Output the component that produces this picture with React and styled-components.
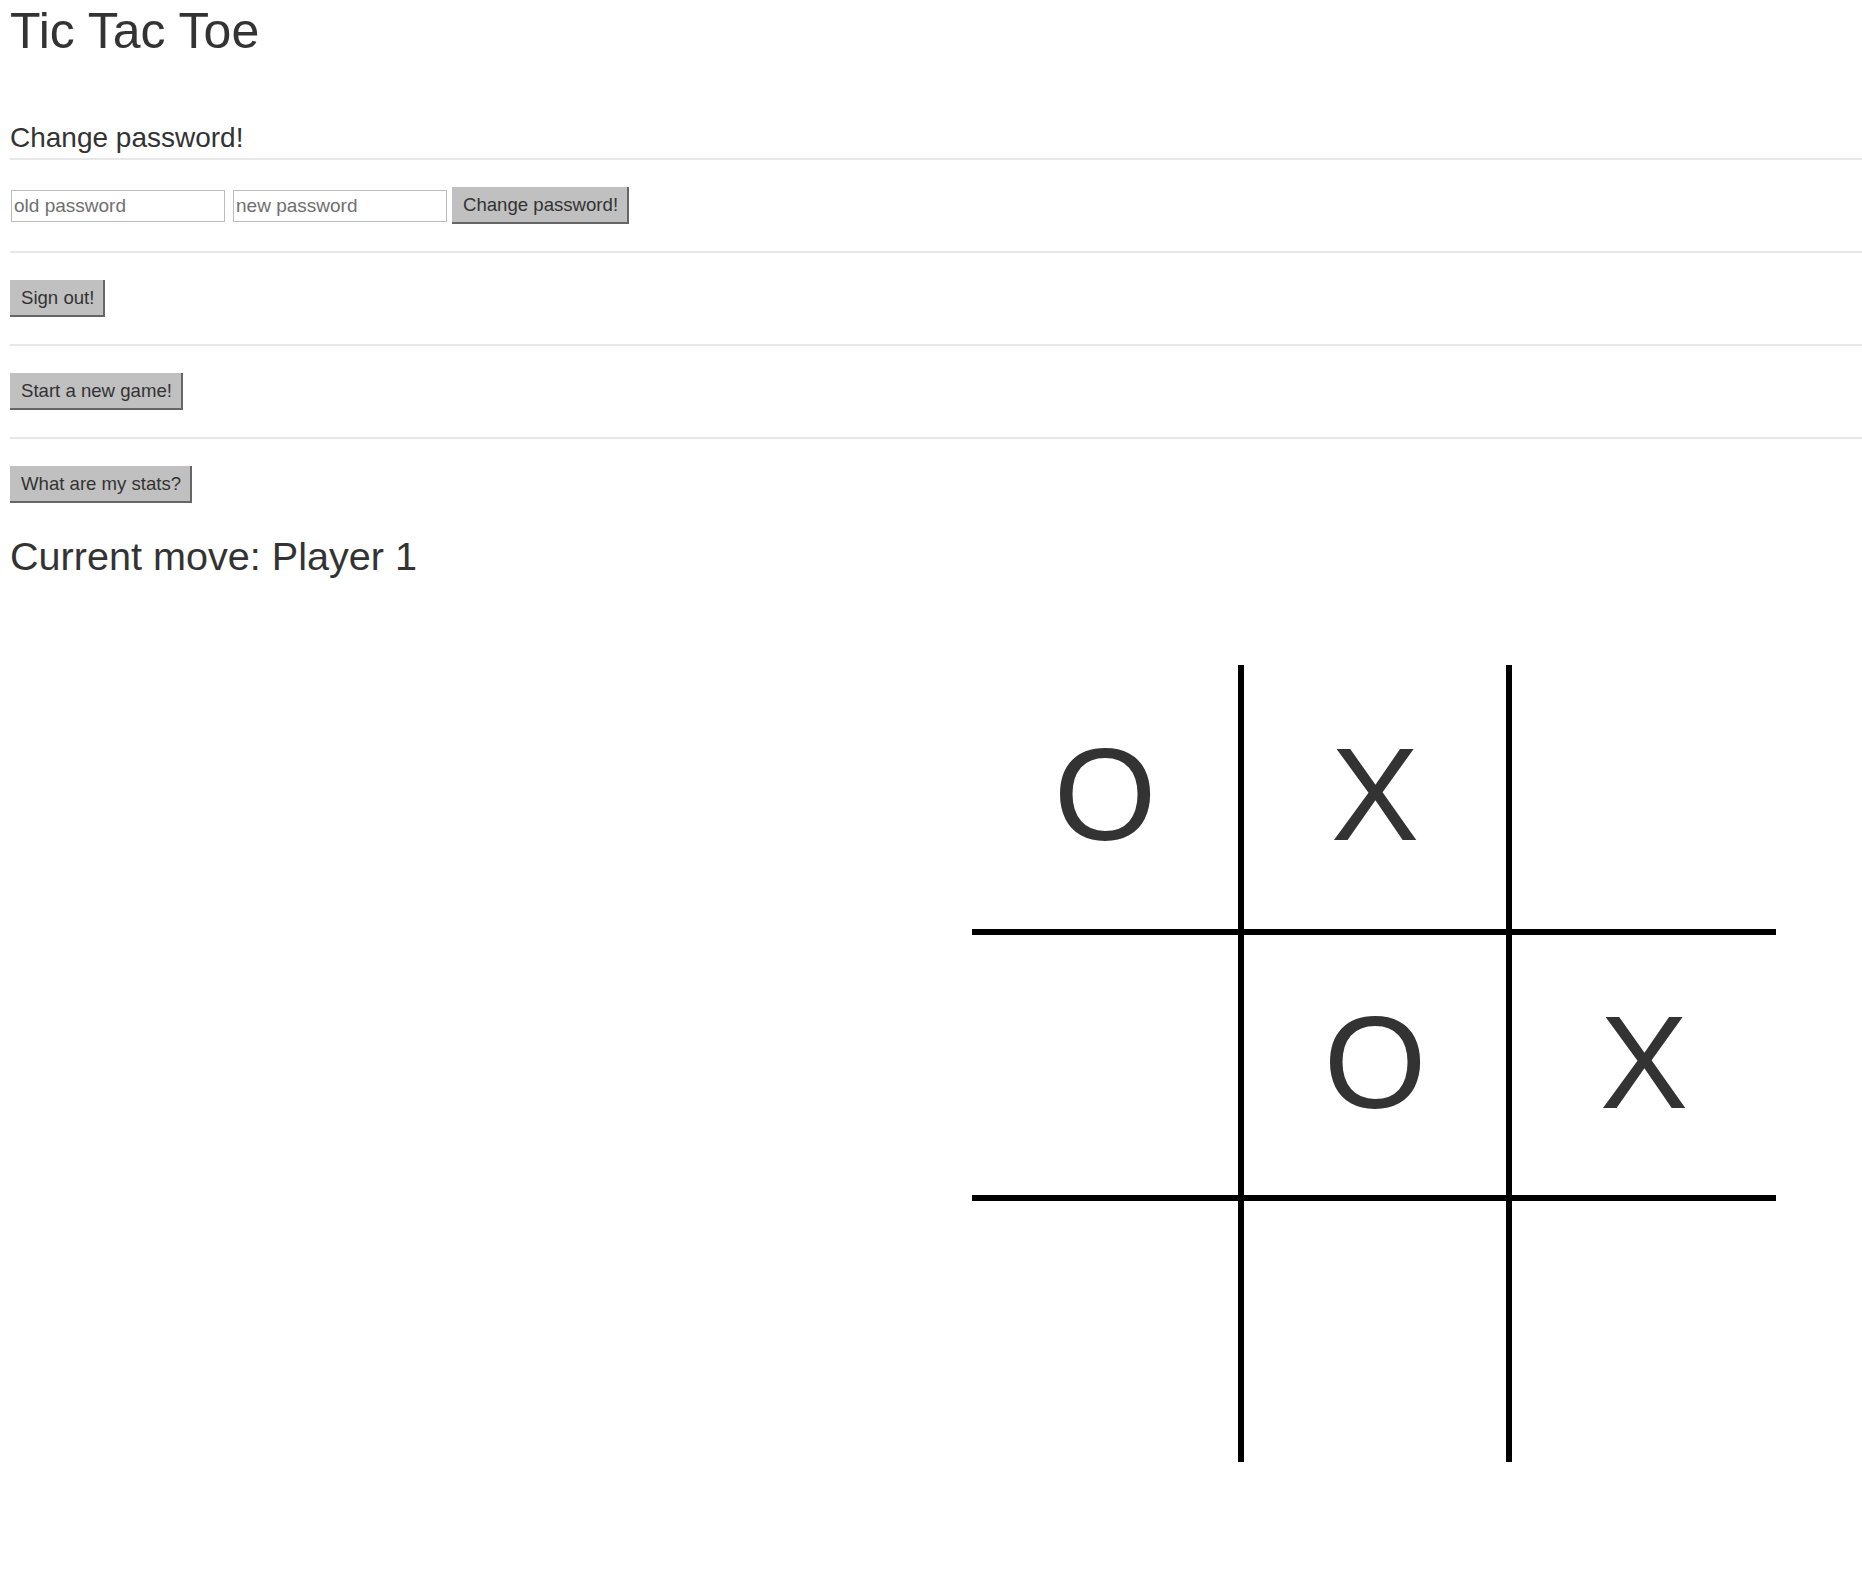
import React from "react";
import styled, { createGlobalStyle } from "styled-components";

const GlobalStyle = createGlobalStyle`
  html, body {
    margin: 0;
    padding: 0;
    background: #ffffff;
  }
  body {
    font-family: "Liberation Sans", Arial, Helvetica, sans-serif;
    color: #333333;
  }
  * { box-sizing: border-box; }
`;

const Page = styled.div`
  padding: 6px 0 60px 10px;
`;

const Title = styled.h1`
  margin: 0;
  font-size: 50px;
  line-height: 50px;
  font-weight: 400;
  color: #333333;
`;

const SectionHeading = styled.h3`
  margin: 68px 0 6px 0;
  font-size: 28px;
  line-height: 28px;
  font-weight: 400;
  color: #333333;
`;

const Rule = styled.hr`
  margin: 27px 0;
  border: 0;
  height: 2px;
  background: #e7e7e7;
  &:first-of-type {
    margin-top: 0;
  }
`;

const FormRow = styled.form`
  display: flex;
  align-items: center;
  padding-left: 1px;
  margin: 0;
`;

const TextInput = styled.input`
  width: 214px;
  height: 32px;
  margin: 0 ${(p) => p.$gap}px 0 0;
  padding: 0 2px;
  border: 1px solid #bcbcbc;
  border-radius: 0;
  background: #ffffff;
  font-family: "Liberation Sans", Arial, sans-serif;
  font-size: 19px;
  color: #333333;
  outline: none;
  &::placeholder {
    color: #6f6f6f;
  }
`;

const ActionButton = styled.button`
  display: inline-flex;
  align-items: center;
  height: 37px;
  margin: 0;
  padding: 0 9px 0 11px;
  background: #c0c0c0;
  border: 0;
  border-right: 2px solid #666666;
  border-bottom: 2px solid #666666;
  border-radius: 0;
  font-family: "Liberation Sans", Arial, sans-serif;
  font-size: 18.6px;
  color: #333333;
  cursor: pointer;
`;

const ButtonRow = styled.div`
  display: flex;
`;

const Status = styled.h2`
  margin: 34px 0 0 0;
  font-size: 39.6px;
  line-height: 39.6px;
  font-weight: 400;
  color: #333333;
`;

const Board = styled.div`
  display: grid;
  grid-template-columns: 266px 262px 264px;
  grid-template-rows: 264px 260px 261px;
  gap: 6px;
  width: max-content;
  margin: 88px 0 0 962px;
  background: #000000;
`;

const Cell = styled.div`
  display: flex;
  align-items: center;
  justify-content: center;
  background: #ffffff;
  font-family: "Liberation Sans", Arial, sans-serif;
  font-size: 132px;
  line-height: 132px;
  color: #333333;
  padding-bottom: 3px;
`;

const cells = ["O", "X", "", "", "O", "X", "", "", ""];

export default function App() {
  return (
    <>
      <GlobalStyle />
      <Page>
        <Title>Tic Tac Toe</Title>
        <SectionHeading>Change password!</SectionHeading>
        <Rule />
        <FormRow onSubmit={(e) => e.preventDefault()}>
          <TextInput type="password" placeholder="old password" $gap={8} />
          <TextInput type="password" placeholder="new password" $gap={5} />
          <ActionButton type="submit">Change password!</ActionButton>
        </FormRow>
        <Rule />
        <ButtonRow>
          <ActionButton type="button">Sign out!</ActionButton>
        </ButtonRow>
        <Rule />
        <ButtonRow>
          <ActionButton type="button">Start a new game!</ActionButton>
        </ButtonRow>
        <Rule />
        <ButtonRow>
          <ActionButton type="button">What are my stats?</ActionButton>
        </ButtonRow>
        <Status>Current move: Player 1</Status>
        <Board>
          {cells.map((c, i) => (
            <Cell key={i}>{c}</Cell>
          ))}
        </Board>
      </Page>
    </>
  );
}
